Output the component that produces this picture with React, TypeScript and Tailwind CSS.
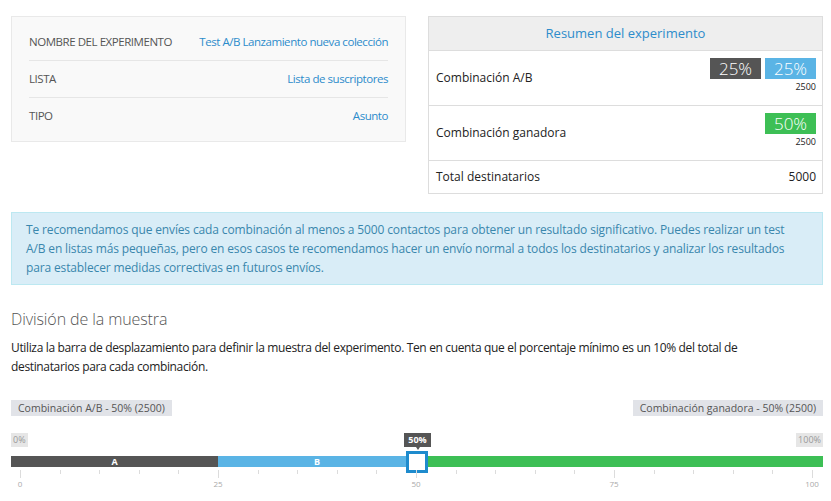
import React from 'react';

const font = { fontFamily: '"Open Sans", "Noto Sans", sans-serif' };

const ticks = Array.from({ length: 21 }, (_, i) => i);

const App: React.FC = () => {
  return (
    <div className="w-[831px] h-[501px] bg-white overflow-hidden" style={font}>
      <div className="w-[812px] ml-[11px] pt-[16px]">
        {/* Top cards */}
        <div className="flex justify-between items-start">
          <div className="w-[395px] bg-[#f9f9f9] border border-[#e9e9e9] px-[17px] py-[7px] text-[11.5px] tracking-[-0.45px] whitespace-nowrap">
            <div className="h-[37px] flex items-center justify-between border-b border-[#e6e6e6]">
              <span className="text-[#555]">NOMBRE DEL EXPERIMENTO</span>
              <span className="text-[#2d8ccb]">Test A/B Lanzamiento nueva colección</span>
            </div>
            <div className="h-[37px] flex items-center justify-between border-b border-[#e6e6e6]">
              <span className="text-[#555]">LISTA</span>
              <span className="text-[#2d8ccb]">Lista de suscriptores</span>
            </div>
            <div className="h-[36px] flex items-center justify-between">
              <span className="text-[#555]">TIPO</span>
              <span className="text-[#2d8ccb]">Asunto</span>
            </div>
          </div>

          <div className="w-[395px] border border-[#dddddd] text-[12px] text-[#222]">
            <div className="h-[34px] bg-[#eeeeee] border-b border-[#dddddd] flex items-center justify-center text-[13px] text-[#2d8ccb]">
              Resumen del experimento
            </div>
            <div className="h-[55px] border-b border-[#dddddd] flex items-center justify-between pl-[7px] pr-[6px]">
              <span>Combinación A/B</span>
              <div className="flex flex-col items-end self-start pt-[7px]">
                <div className="flex gap-[4px]">
                  <span className="w-[51px] h-[21px] bg-[#555555] text-white text-[17px] leading-[21px] text-center font-light">25%</span>
                  <span className="w-[51px] h-[21px] bg-[#5ab4e5] text-white text-[17px] leading-[21px] text-center font-light">25%</span>
                </div>
                <span className="text-[9px] leading-[15px]">2500</span>
              </div>
            </div>
            <div className="h-[55px] border-b border-[#dddddd] flex items-center justify-between pl-[7px] pr-[6px]">
              <span>Combinación ganadora</span>
              <div className="flex flex-col items-end self-start pt-[7px]">
                <span className="w-[51px] h-[21px] bg-[#3dbf55] text-white text-[17px] leading-[21px] text-center font-light">50%</span>
                <span className="text-[9px] leading-[15px]">2500</span>
              </div>
            </div>
            <div className="h-[32px] flex items-center justify-between pl-[7px] pr-[6px]">
              <span>Total destinatarios</span>
              <span>5000</span>
            </div>
          </div>
        </div>

        {/* Info */}
        <div className="mt-[18px] bg-[#d9edf7] border border-[#bce8f1] pl-[14px] pr-[28px] py-[7px] text-[12px] tracking-[-0.14px] leading-[19px] text-[#3a87ad]">
          Te recomendamos que envíes cada combinación al menos a 5000 contactos para obtener un resultado significativo. Puedes realizar un test A/B en listas más pequeñas, pero en esos casos te recomendamos hacer un envío normal a todos los destinatarios y analizar los resultados para establecer medidas correctivas en futuros envíos.
        </div>

        {/* División */}
        <h2 className="mt-[23px] text-[16px] font-light text-[#555] leading-[22px] tracking-[-0.1px]">División de la muestra</h2>
        <p className="mt-[8px] pr-[36px] text-[12px] tracking-[-0.35px] leading-[19px] text-[#222]">
          Utiliza la barra de desplazamiento para definir la muestra del experimento. Ten en cuenta que el porcentaje mínimo es un 10% del total de destinatarios para cada combinación.
        </p>

        <div className="mt-[24px] flex justify-between text-[10.5px] text-[#555]">
          <span className="h-[16px] leading-[16px] px-[7px] bg-[#e1e3e8]">Combinación A/B - 50% (2500)</span>
          <span className="h-[16px] leading-[16px] px-[7px] bg-[#e1e3e8]">Combinación ganadora - 50% (2500)</span>
        </div>

        {/* Slider */}
        <div className="relative mt-[17px] h-[68px]">
          <span className="absolute left-0 top-0 h-[14px] leading-[14px] px-[2px] bg-[#e6e6e6] text-[#999] text-[9px]">0%</span>
          <span className="absolute right-0 top-0 h-[14px] leading-[14px] px-[2px] bg-[#e6e6e6] text-[#999] text-[9px]">100%</span>
          <div className="absolute left-[393px] top-0 w-[27px] h-[14px] leading-[14px] bg-[#555] text-white text-[9px] font-bold text-center">
            50%
            <span className="absolute left-1/2 -translate-x-1/2 top-[14px] w-0 h-0 border-l-[2px] border-r-[2px] border-t-[3px] border-l-transparent border-r-transparent border-t-[#555]" />
          </div>

          <div className="absolute left-0 right-0 top-[23px] h-[11px] flex text-white text-[9px] font-bold leading-[11px]">
            <div className="w-[207px] bg-[#555555] text-center">A</div>
            <div className="w-[198px] bg-[#5ab4e5] text-center">B</div>
            <div className="flex-1 bg-[#3dbf55]" />
          </div>

          <div className="absolute left-[395px] top-[18px] w-[22px] h-[22px] border-[3px] border-[#1e8bcd] bg-white" />

          {ticks.map((i) => {
            const major = i % 5 === 0;
            const x = 9 + i * 39.6;
            return (
              <div key={i} className="absolute top-[37px]" style={{ left: x }}>
                <div className={major ? 'w-px h-[8px] bg-[#dcdcdc]' : 'w-px h-[4px] bg-[#dcdcdc]'} />
                {major && (
                  <span className="absolute top-[9px] left-0 -translate-x-1/2 text-[8px] text-[#aaa] leading-[10px]">{i * 5}</span>
                )}
              </div>
            );
          })}
        </div>
      </div>
    </div>
  );
};

export default App;
